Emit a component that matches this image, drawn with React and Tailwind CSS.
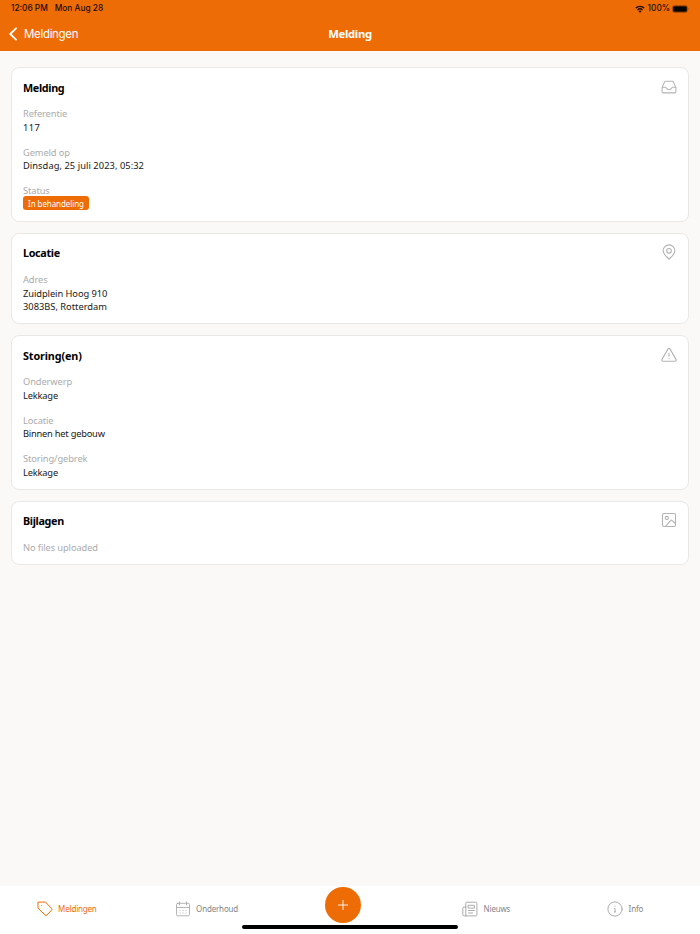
import React from "react";

const stroke = { fill: "none", stroke: "currentColor", strokeLinecap: "round", strokeLinejoin: "round" };

function Icon({ children, className = "size-4", width = 1 }) {
  return (
    <svg viewBox="0 0 16 16" className={`block shrink-0 ${className}`} {...stroke} strokeWidth={width}>
      {children}
    </svg>
  );
}

const InboxIcon = () => (
  <Icon width={1.1}>
    <path d="M1.1 8.6 3.500 3.100Q3.800 2.300 4.500 2.300h7q.7 0 1 .8l2.400 5.500v4.100q0 1.200-1.200 1.200H2.300q-1.200 0-1.200-1.200Z" />
    <path d="M1.300 8.300h3.200c.8 0 .9 2.300 3.500 2.300s2.700-2.300 3.500-2.300h3.200" />
  </Icon>
);

const PinIcon = () => (
  <Icon width={1.1}>
    <path d="M8 15.100C6.200 13.300 2.100 10.400 2.100 6.800a5.900 5.900 0 0 1 11.800 0c0 3.600-4.100 6.500-5.900 8.300Z" />
    <circle cx="8" cy="6.800" r="2.300" />
  </Icon>
);

const WarningIcon = () => (
  <Icon width={1.1}>
    <path d="M7.100 1.900q.9-1.400 1.800 0l6.100 10.500q.7 1.700-1 1.800H2q-1.700-.1-1-1.800Z" />
    <path d="M8 6v3.300M8 11.500v.1" />
  </Icon>
);

const ImageIcon = () => (
  <Icon width={1.1}>
    <rect x="1.500" y="1.500" width="13" height="13" rx="1.500" />
    <circle cx="5.800" cy="6" r="1.600" />
    <path d="m4.500 14.300 5.200-5.700q.8-.8 1.600 0l3.100 2.900" />
  </Icon>
);

const TagIcon = () => (
  <Icon width={1}>
    <path d="M1.300 1.100h7.200l6.100 6.400q.8.8 0 1.600l-4.800 5q-.8.8-1.600 0L1.300 7.400Z" />
    <path d="M4.600 4.400v.1" strokeWidth="0.800" />
  </Icon>
);

const CalendarIcon = () => (
  <Icon width={0.8}>
    <rect x="1.500" y="2.300" width="13" height="12.500" rx="1.200" />
    <path d="M1.500 6.500h13M4.500 1v3M11.500 1v3" />
    <path d="M5 9.500h.1M8 9.500h.1M11 9.500h.1M5 12h.1M8 12h.1M11 12h.1" />
  </Icon>
);

const NewsIcon = () => (
  <Icon width={0.9}>
    <path d="M3.800 14.900V2.300q0-1.100 1.100-1.100h8.900q1.100 0 1.100 1.100v11.500q0 1.100-1.100 1.100H2.400Q.8 14.900.8 13.400V7.200q0-1.100 1.100-1.100h1.900" />
    <path d="M6.500 4.300h5.800v2.800H6.500ZM6.500 9.500h5.800M6.500 12h4" />
  </Icon>
);

const InfoIcon = () => (
  <Icon width={0.9}>
    <circle cx="8" cy="8" r="7.100" />
    <path d="M7.500 7.400H8v3.500M7.500 10.900h1M8 5.100v.1" />
  </Icon>
);

function Card({ title, icon, className, titleClass = "tracking-[-0.340px]", bodyClass = "mt-[11.400px]", children }) {
  return (
    <section className={`rounded-lg border border-[#e9e8e7] bg-white px-[11px] ${className}`}>
      <div className="flex h-4 items-center justify-between">
        <h2 className={`text-[10.800px] leading-4 font-bold text-black ${titleClass}`}>{title}</h2>
        <div className="-mt-0.5 text-[#b4b4b4]">{icon}</div>
      </div>
      <div className={`flex flex-col gap-[10.900px] ${bodyClass}`}>{children}</div>
    </section>
  );
}

function Field({ label, className = "", children }) {
  return (
    <div className="text-[9.300px] leading-[13.670px] text-[#171717]">
      <div className="tracking-[-0.100px] text-[#ababab]">{label}</div>
      <div className={className}>{children}</div>
    </div>
  );
}

function Tab({ icon, label, className, iconClass = "text-[#a3a3a3]" }) {
  return (
    <div className={`flex h-4 items-center gap-[5.600px] text-[8px] leading-4 tracking-[-0.180px] ${className}`}>
      <span className={iconClass}>{icon}</span>
      <span>{label}</span>
    </div>
  );
}

export default function App() {
  return (
    <div className="flex h-[934px] w-[700px] flex-col overflow-hidden bg-[#faf9f7] font-['Noto_Sans',sans-serif]">
      <header className="h-[51px] shrink-0 bg-[#ee6c06]">
        <div className="flex h-[17px] items-center justify-between pr-[10px] pl-[11px] font-['Inter',sans-serif] text-[8.300px] font-medium text-[#1c0c00]">
          <div className="flex gap-[7px]">
            <span>12:06 PM</span>
            <span>Mon Aug 28</span>
          </div>
          <div className="flex items-center">
            <svg viewBox="0 0 10 8" className="mr-[3px] h-2 w-2.5" fill="none" stroke="currentColor" strokeWidth="1.400">
              <path d="M.8 3.100a6 6 0 0 1 8.400 0M2.500 4.900a3.600 3.600 0 0 1 5 0" />
              <path d="M5 7.700 3.500 6.200a2.100 2.100 0 0 1 3 0Z" fill="currentColor" stroke="none" />
            </svg>
            <span>100%</span>
            <svg viewBox="0 0 18 8" className="ml-0.5 h-2 w-[18px]">
              <rect x=".5" y=".5" width="15" height="7" rx="2" fill="none" stroke="#8b4109" strokeWidth=".7" />
              <rect x="1.200" y="1.200" width="13.600" height="5.600" rx="1.200" fill="#000" />
              <path d="M16.500 2.800q1.200 1.200 0 2.400Z" fill="#8b4109" />
            </svg>
          </div>
        </div>
        <div className="grid h-[34px] grid-cols-3 items-center text-white">
          <div className="flex items-center gap-[7px] pl-[9px] font-['Inter',sans-serif] text-[11.500px] tracking-[-0.320px]">
            <svg viewBox="0 0 8 14" className="h-3.5 w-2" {...stroke} strokeWidth="1.800">
              <path d="M7 1.300 1.300 7 7 12.700" />
            </svg>
            <span className="pt-px">Meldingen</span>
          </div>
          <h1 className="pt-px text-center text-[11.300px] font-bold tracking-[-0.300px]">Melding</h1>
        </div>
      </header>

      <main className="flex flex-1 flex-col gap-[11px] px-[11px] pt-4">
        <Card title="Melding" icon={<InboxIcon />} className="h-[155px] pt-3">
          <Field label="Referentie" className="tracking-[0.400px]">117</Field>
          <Field label="Gemeld op" className="tracking-[0.060px]">Dinsdag, 25 juli 2023, 05:32</Field>
          <Field label="Status">
            <span className="-mt-[1.700px] flex h-3.5 w-[66px] items-center justify-center rounded-[3px] bg-[#ee6c06] pt-px text-[8px] tracking-[-0.080px] text-white">
              In behandeling
            </span>
          </Field>
        </Card>
        <Card title="Locatie" icon={<PinIcon />} className="h-[91px] pt-[11px]" bodyClass="mt-3">
          <Field label="Adres">
            <div className="tracking-[-0.060px]">Zuidplein Hoog 910</div>
            <div>3083BS, Rotterdam</div>
          </Field>
        </Card>
        <Card title="Storing(en)" icon={<WarningIcon />} className="h-[155px] pt-3" titleClass="tracking-[-0.120px]">
          <Field label="Onderwerp" className="tracking-[-0.180px]">Lekkage</Field>
          <Field label="Locatie" className="tracking-[-0.220px]">Binnen het gebouw</Field>
          <Field label="Storing/gebrek" className="tracking-[-0.180px]">Lekkage</Field>
        </Card>
        <Card title="Bijlagen" icon={<ImageIcon />} className="h-16 pt-[11px]" bodyClass="mt-3">
          <Field label="No files uploaded" />
        </Card>
      </main>

      <footer className="flex h-12 shrink-0 flex-col bg-white">
        <nav className="flex h-[39px] items-start pt-[1.300px] text-[#858585]">
          <Tab icon={<TagIcon />} label="Meldingen" className="mt-3.5 w-[138.500px] pl-[36.500px] text-[#ee6c06]" iconClass="text-[#ee6c06]" />
          <Tab icon={<CalendarIcon />} label="Onderhoud" className="mt-3.5 w-[186.500px] pl-9" />
          <button className="flex size-9 items-center justify-center rounded-full bg-[#ee6c06] text-white" aria-label="+">
            <svg viewBox="0 0 10 10" className="size-2.5" {...stroke} strokeWidth="0.900">
              <path d="M5 .3v9.400M.3 5h9.400" />
            </svg>
          </button>
          <Tab icon={<NewsIcon />} label="Nieuws" className="mt-3.5 ml-[101px] w-[145px]" />
          <Tab icon={<InfoIcon />} label="Info" className="mt-3.5" />
        </nav>
        <div className="ml-[242px] h-1 w-[216px] rounded-full bg-black" />
      </footer>
    </div>
  );
}
